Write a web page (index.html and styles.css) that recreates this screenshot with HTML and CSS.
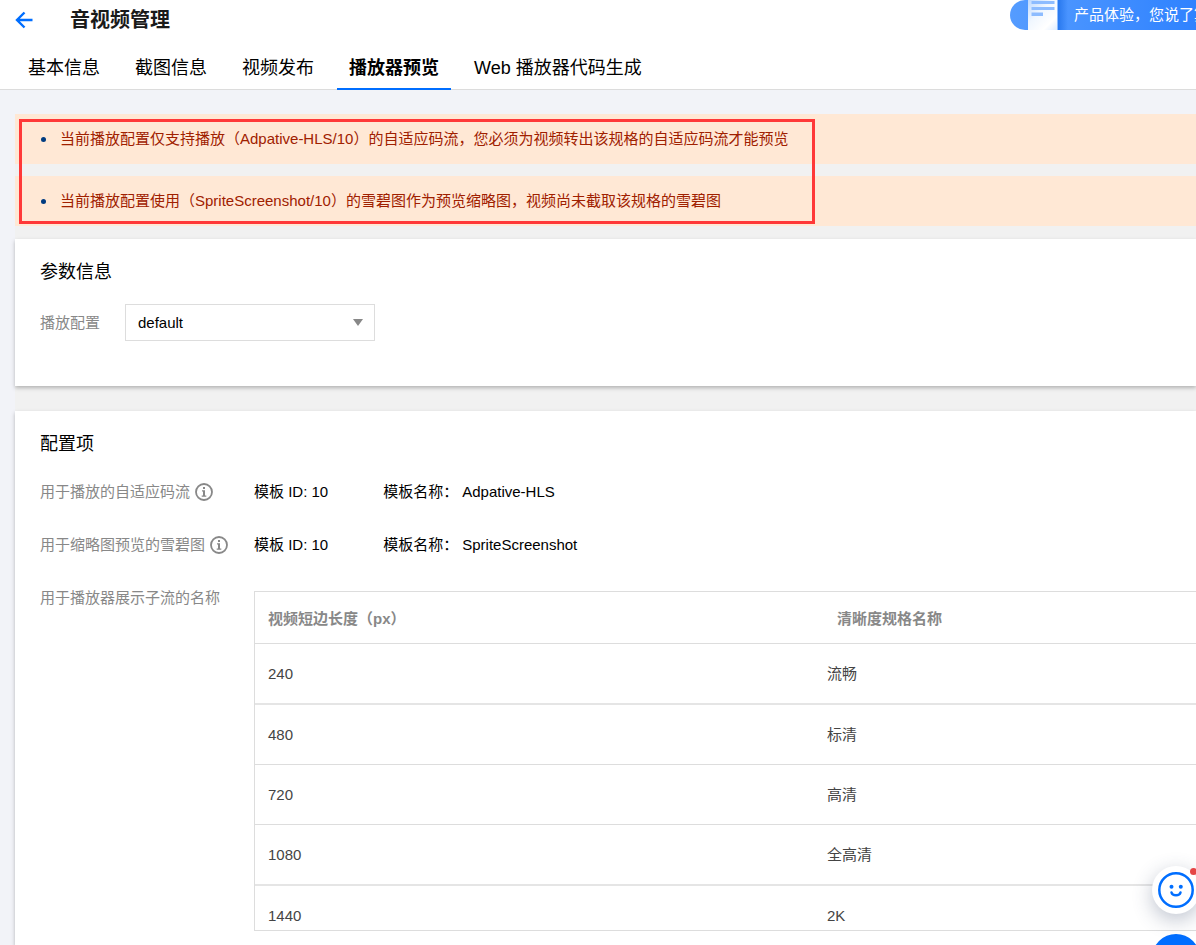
FILE: index.html
```html
<!DOCTYPE html>
<html lang="zh-CN">
<head>
<meta charset="utf-8">
<title>音视频管理</title>
<link rel="stylesheet" href="styles.css">
</head>
<body>
<header class="header">
  <div class="header-top">
    <button class="back" type="button" aria-label="返回">
      <svg width="18" height="18" viewBox="0 0 18 18" fill="none" stroke="#006eff" stroke-width="2.4"><path d="M17.500 9H2M9.500 1.500L2 9l7.500 7.500"/></svg>
    </button>
    <h1 class="title">音视频管理</h1>
    <a class="promo" href="#">
      <svg class="promo-art" width="60" height="30" viewBox="0 0 60 30">
        <defs>
          <linearGradient id="paper" x1="0" y1="0" x2="1" y2="1"><stop offset="0" stop-color="#bcd8ff"/><stop offset=".4" stop-color="#f0f7ff"/><stop offset=".75" stop-color="#fff"/><stop offset="1" stop-color="#dcebff"/></linearGradient>
          <linearGradient id="shade"><stop offset="0" stop-color="#2878ee"/><stop offset="1" stop-color="#2878ee" stop-opacity="0"/></linearGradient>
        </defs>
        <path fill="url(#shade)" d="M48 0h10v30H48z"/>
        <path fill="url(#paper)" d="M18 0h30v30H18z"/>
        <path fill="#8dbcff" d="M21.500 1h23v3h-23zM21.500 7h23v3h-23zM21.500 12.500h11.500V16H21.500zM47 0h1v30h-1z"/>
      </svg>
      <span class="promo-text">产品体验，您说了算</span>
    </a>
  </div>
  <nav class="tabs">
    <a class="tab" href="#">基本信息</a>
    <a class="tab" href="#">截图信息</a>
    <a class="tab" href="#">视频发布</a>
    <a class="tab tab-active" href="#" aria-current="page">播放器预览</a>
    <a class="tab" href="#">Web 播放器代码生成</a>
  </nav>
</header>
<main class="main">
  <ul class="notices">
    <li class="notice">当前播放配置仅支持播放（Adpative-HLS/10）的自适应码流，您必须为视频转出该规格的自适应码流才能预览</li>
    <li class="notice">当前播放配置使用（SpriteScreenshot/10）的雪碧图作为预览缩略图，视频尚未截取该规格的雪碧图</li>
  </ul>
  <section class="card card-params">
    <h2 class="card-title">参数信息</h2>
    <div class="field">
      <label class="label" for="config">播放配置</label>
      <span class="select-wrap">
        <select class="select" id="config"><option>default</option></select>
        <svg class="caret" width="10" height="7" viewBox="0 0 10 7"><path fill="#888" d="M0 0h10L5 7z"/></svg>
      </span>
    </div>
  </section>
  <section class="card card-config">
    <h2 class="card-title">配置项</h2>
    <div class="config-grid">
      <div class="label config-label">用于播放的自适应码流
        <svg class="info" width="18" height="18" viewBox="0 0 18 18"><circle cx="9" cy="9" r="8" fill="none" stroke="#888" stroke-width="1.800"/><path fill="#888" d="M8 4h2v2H8zM7 7.300h3v5.200h1.300v1.300H6.700v-1.300H8V8.600H7z"/></svg>
      </div>
      <div class="values"><span>模板 ID: 10</span><span class="name">模板名称：<span>Adpative-HLS</span></span></div>
      <div class="label config-label">用于缩略图预览的雪碧图
        <svg class="info" width="18" height="18" viewBox="0 0 18 18"><circle cx="9" cy="9" r="8" fill="none" stroke="#888" stroke-width="1.800"/><path fill="#888" d="M8 4h2v2H8zM7 7.300h3v5.200h1.300v1.300H6.700v-1.300H8V8.600H7z"/></svg>
      </div>
      <div class="values"><span>模板 ID: 10</span><span class="name">模板名称：<span>SpriteScreenshot</span></span></div>
      <div class="label config-label">用于播放器展示子流的名称</div>
      <div class="table-box">
        <table class="table">
          <thead><tr><th class="col-size" scope="col">视频短边长度（px）</th><th class="col-name" scope="col">清晰度规格名称</th></tr></thead>
          <tbody>
            <tr class="row-thick"><td>240</td><td>流畅</td></tr>
            <tr><td>480</td><td>标清</td></tr>
            <tr><td>720</td><td>高清</td></tr>
            <tr class="row-thick"><td>1080</td><td>全高清</td></tr>
            <tr><td>1440</td><td>2K</td></tr>
          </tbody>
        </table>
      </div>
    </div>
  </section>
  <div class="highlight"></div>
</main>
<aside class="floating">
  <button class="face" type="button" aria-label="反馈">
    <svg width="36" height="36" viewBox="0 0 36 36" fill="none" stroke="#006eff"><circle cx="18" cy="18" r="16.700" stroke-width="2.500"/><path stroke-width="2.500" stroke-linecap="round" d="M13.500 20.500c1 3.800 8 3.800 9 0"/><circle cx="13.500" cy="14.700" r="2" fill="#006eff" stroke="none"/><circle cx="22.800" cy="14.700" r="2" fill="#006eff" stroke="none"/></svg>
    <span class="dot"></span>
  </button>
  <button class="more" type="button" aria-label="联系我们"></button>
</aside>
</body>
</html>
```
FILE: styles.css
```css
* { box-sizing: border-box; }

body {
  display: flex;
  flex-direction: column;
  height: 100vh;
  margin: 0;
  overflow: hidden;
  background: #f2f3f8;
  color: #000;
  font: 15px/20px "Liberation Sans", "Noto Sans CJK SC", sans-serif;
}

h1, h2, ul { margin: 0; padding: 0; }

button { padding: 0; border: 0; cursor: pointer; }

.header {
  flex: none;
  background: #fff;
  border-bottom: 1px solid #dcdcdc;
}

.header-top {
  display: flex;
  align-items: center;
  height: 40px;
  padding-left: 15px;
}

.back { display: flex; width: 18px; margin-right: 37px; background: none; }

.title { font-size: 20px; line-height: 28px; color: #1a1a1a; }

.promo {
  display: flex;
  align-items: center;
  align-self: flex-start;
  width: 186px;
  height: 30px;
  margin-left: auto;
  overflow: hidden;
  border-radius: 15px 0 0 15px;
  background: linear-gradient(90deg, #559cff, #2f82ff);
  color: #fff;
  text-decoration: none;
  white-space: nowrap;
}

.promo-art { flex: none; margin-right: 4px; }

.tabs {
  display: flex;
  gap: 11px;
  height: 49px;
  padding-left: 16px;
}

.tab {
  height: 50px;
  padding: 14px 12px 0;
  color: #000;
  font-size: 18px;
  line-height: 28px;
  text-decoration: none;
}

.tab-active { border-bottom: 2px solid #006eff; font-weight: 700; }

.main {
  position: relative;
  display: flex;
  flex: 1;
  flex-direction: column;
  min-height: 0;
  margin: 24px 0 0 15px;
  background: #f1f1f1;
}

.notices {
  display: flex;
  flex-direction: column;
  gap: 12px;
  margin-bottom: 13px;
  list-style: none;
}

.notice {
  display: flex;
  align-items: center;
  gap: 14px;
  min-height: 50px;
  padding-left: 26px;
  background: #ffe8d5;
  color: #a02000;
}

.notice::before {
  width: 5px;
  height: 5px;
  border-radius: 50%;
  background: #003b80;
  content: "";
}

.highlight {
  position: absolute;
  top: 5px;
  left: 4px;
  width: 796px;
  height: 105px;
  border: 3px solid #ff3838;
  pointer-events: none;
}

.card {
  flex: none;
  padding: 21px 0 0 25px;
  background: #fff;
  box-shadow: 0 2px 4px rgba(0, 0, 0, .26);
}

.card-params { margin-bottom: 25px; padding-bottom: 45px; }

.card-config { flex: 1; }

.card-title { font-size: 18px; font-weight: 400; line-height: 25px; }

.field { display: flex; align-items: center; margin-top: 19px; }

.label { color: #888; }

.field .label { width: 85px; }

.select-wrap { position: relative; width: 250px; }

.select {
  width: 100%;
  height: 37px;
  padding: 0 12px;
  border: 1px solid #ddd;
  border-radius: 0;
  background: #fff;
  color: #000;
  font: inherit;
  appearance: none;
}

.caret { position: absolute; top: 15px; right: 12px; pointer-events: none; }

.config-grid {
  display: grid;
  grid-template-columns: 214px 1fr;
  row-gap: 33px;
  margin-top: 25px;
}

.config-label { display: flex; align-items: center; align-self: start; gap: 5px; }

.values { display: flex; gap: 55px; }

.name { display: flex; gap: 4px; }

.table-box {
  height: 340px;
  margin-top: 3px;
  overflow: hidden;
  border: 1px solid #ddd;
  border-right: 0;
}

.table { width: 100%; border-collapse: separate; border-spacing: 0; }

.table th,
.table td {
  padding: 0 13px;
  border-bottom: 1px solid #ddd;
  text-align: left;
}

.table th { height: 52px; padding-top: 2px; color: #888; }

.table td { height: 60px; color: #444; }

.table .row-thick td { height: 61px; border-bottom: 2px solid #e5e5e5; }

.table .col-size { width: 559px; }

.table .col-name { padding-left: 23px; }

.floating { position: fixed; right: -4px; bottom: -37px; }

.face {
  position: relative;
  display: flex;
  align-items: center;
  justify-content: center;
  width: 48px;
  height: 48px;
  margin-bottom: 20px;
  border-radius: 50%;
  background: #fff;
  box-shadow: 0 6px 20px rgba(55, 70, 105, .32);
}

.dot {
  position: absolute;
  top: 2px;
  right: 3px;
  width: 7px;
  height: 7px;
  border-radius: 50%;
  background: #e54545;
}

.more { display: block; width: 48px; height: 48px; border-radius: 50%; background: #006eff; }
```
